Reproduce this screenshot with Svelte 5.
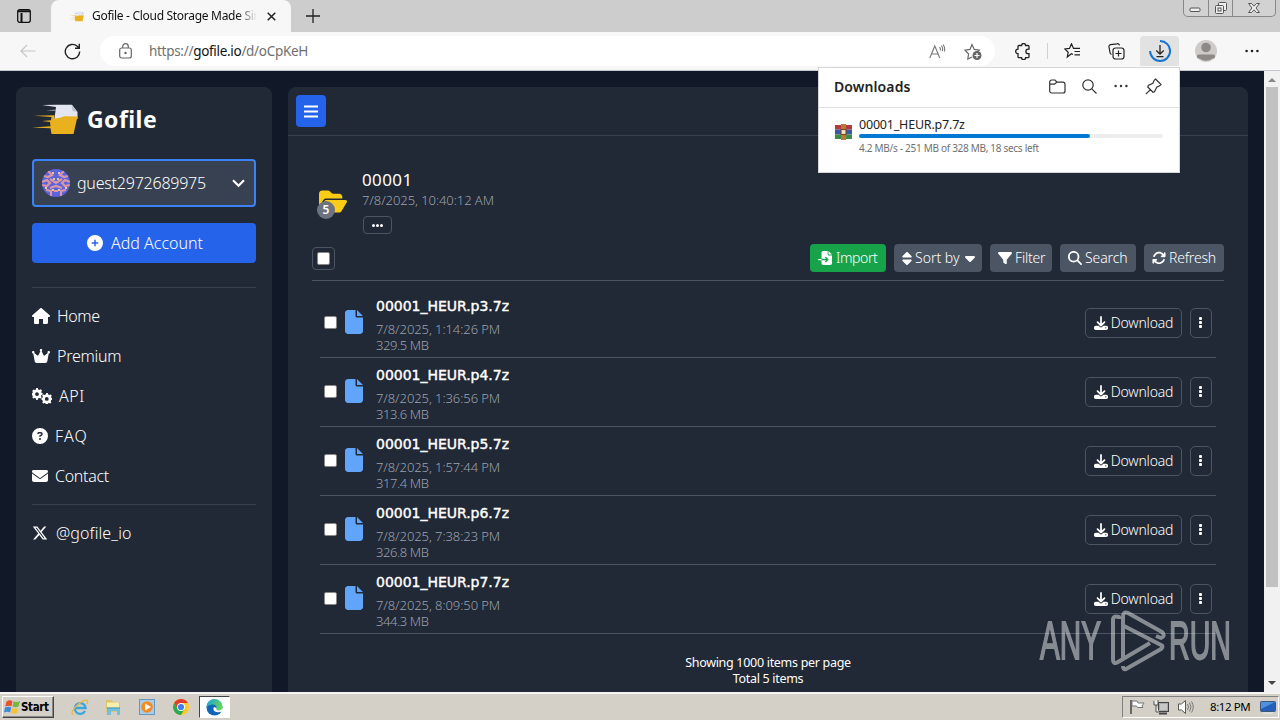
<script>
  const icons = {
    house: ['0 0 576 512', 'M575.8 255.5c0 18-15 32.1-32 32.1h-32l.7 180c0 26-16 44.400-40 44.400H376c-14 0-24-10-24-24V352H224v136c0 14-10 24-24 24H104c-24 0-40-18-40-40V287.600H32c-18 0-32-14-32-32.100c0-9 3-17 10-24L266.400 8c7-7 15-8 22-8s15 2 21 7L564.800 231.500c8 7 12 15 11 24z'],
    crown: ['0 0 576 512', 'M309 106c11.400-7 19-19.700 19-34c0-22.100-17.900-40-40-40s-40 17.900-40 40c0 14.400 7.600 27 19 34L209.700 220.600c-9.100 18.200-32.700 23.400-48.600 10.700L72 160c5-6.700 8-15 8-24c0-22.100-17.900-40-40-40S0 113.900 0 136s17.900 40 40 40L86.400 427.400c5.500 30.400 32 52.600 63 52.600H426.600c30.900 0 57.400-22.100 63-52.600L535.300 176c22.800 0 40.700-17.900 40.700-40s-17.900-40-40-40s-40 17.900-40 40c0 9 3 17.300 8 24l-89.100 71.300c-15.900 12.700-39.500 7.500-48.600-10.700L309 106z'],
    question: ['0 0 512 512', 'M256 512A256 256 0 1 0 256 0a256 256 0 1 0 0 512zM169.800 165.300c7.900-22.300 29.100-37.300 52.800-37.300h58.300c34.900 0 63.100 28.300 63.100 63.100c0 22.600-12.100 43.500-31.700 54.800L280 264.400c-.2 13-10.900 23.600-24 23.600c-13.300 0-24-10.700-24-24V250.500c0-8.600 4.600-16.500 12.100-20.800l44.300-25.400c4.700-2.700 7.600-7.700 7.600-13.100c0-8.400-6.800-15.100-15.100-15.100H222.600c-3.400 0-6.400 2.100-7.500 5.300l-.4 1.200c-4.400 12.500-18.200 19-30.600 14.600s-19-18.200-14.600-30.600l.4-1.200zM224 352a32 32 0 1 1 64 0 32 32 0 1 1 -64 0z'],
    mail: ['0 0 512 512', 'M48 64C21.500 64 0 85.500 0 112c0 15.100 7.100 29.300 19.200 38.400L236.800 313.600c11.400 8.500 27 8.500 38.400 0L492.800 150.400c12.100-9.100 19.200-23.300 19.200-38.400c0-26.500-21.500-48-48-48H48zM0 176V384c0 35.300 28.700 64 64 64H448c35.300 0 64-28.700 64-64V176L294.400 339.200c-22.800 17.100-54 17.100-76.800 0L0 176z'],
    x: ['0 0 512 512', 'M389.200 48h70.600L305.600 224.200 487 464H345L233.700 318.600 106.500 464H35.800L200.700 275.500 26.800 48H172.400L272.900 180.900 389.200 48zM364.400 421.800h39.100L151.100 88h-42L364.400 421.800z'],
    plus: ['0 0 512 512', 'M256 512A256 256 0 1 0 256 0a256 256 0 1 0 0 512zM232 344V280H168c-13.300 0-24-10.700-24-24s10.700-24 24-24h64V168c0-13.300 10.700-24 24-24s24 10.700 24 24v64h64c13.300 0 24 10.700 24 24s-10.700 24-24 24H280v64c0 13.300-10.700 24-24 24s-24-10.700-24-24z'],
    filter: ['0 0 512 512', 'M3.900 54.900C10.500 40.900 24.500 32 40 32H472c15.500 0 29.500 8.900 36.100 22.900s4.600 30.500-5.200 42.500L320 320.900V448c0 12.100-6.800 23.200-17.700 28.600s-23.800 4.300-33.500-3l-64-48c-8.100-6-12.800-15.500-12.800-25.600V320.900L9 97.300C-.7 85.400-2.800 68.800 3.900 54.900z'],
    search: ['0 0 512 512', 'M416 208c0 45.900-14.900 88.300-40 122.700L502.600 457.400c12.500 12.500 12.500 32.800 0 45.300s-32.800 12.500-45.300 0L330.700 376c-34.400 25.200-76.800 40-122.700 40C93.100 416 0 322.900 0 208S93.100 0 208 0S416 93.100 416 208zM208 352a144 144 0 1 0 0-288 144 144 0 1 0 0 288z'],
    sort: ['0 0 320 512', 'M137.400 41.400c12.500-12.500 32.800-12.500 45.300 0l128 128c9.200 9.200 11.900 22.900 6.900 34.900s-16.600 19.800-29.600 19.800H32c-12.900 0-24.600-7.800-29.600-19.800s-2.200-25.700 6.900-34.900l128-128zm0 429.300l-128-128c-9.200-9.200-11.900-22.900-6.900-34.900s16.600-19.800 29.600-19.800H288c12.900 0 24.600 7.800 29.600 19.800s2.200 25.700-6.900 34.900l-128 128c-12.500 12.500-32.800 12.500-45.300 0z'],
    caret: ['0 0 320 512', 'M137.400 374.600c12.500 12.500 32.800 12.500 45.300 0l128-128c9.200-9.200 11.900-22.900 6.900-34.900S301 192 288 192H32c-12.900 0-24.600 7.800-29.600 19.800s-2.200 25.700 6.900 34.900z'],
    rotate: ['0 0 512 512', 'M105.100 202.600c7.700-21.800 20.200-42.300 37.800-59.800c62.500-62.500 163.800-62.500 226.300 0L386.300 160H352c-17.700 0-32 14.300-32 32s14.300 32 32 32H463.900c17.700 0 32-14.300 32-32V80c0-17.700-14.300-32-32-32s-32 14.300-32 32v35.200L414.400 97.600c-87.500-87.500-229.300-87.500-316.800 0C73.200 122 55.600 150.700 44.800 181.400c-5.900 16.700 2.900 34.900 19.500 40.800s34.900-2.900 40.800-19.500zM39 289.300c-5 1.500-9.800 4.200-13.700 8.200c-4 4-6.700 8.800-8.100 14c-.8 3-1.200 6-1.200 8.900V432c0 17.700 14.300 32 32 32s32-14.300 32-32V396.900l17.600 17.500c87.500 87.400 229.300 87.400 316.700 0c24.400-24.400 42.100-53.100 52.900-83.700c5.900-16.700-2.900-34.900-19.500-40.800s-34.900 2.900-40.800 19.500c-7.700 21.800-20.200 42.300-37.800 59.800c-62.500 62.500-163.800 62.500-226.300 0L125.600 352H160c17.700 0 32-14.300 32-32s-14.300-32-32-32H48.400c-3.200 0-6.400.3-9.400 1.300z'],
    download: ['0 0 512 512', 'M288 32c0-17.700-14.300-32-32-32s-32 14.300-32 32V274.700l-73.400-73.400c-12.500-12.500-32.800-12.500-45.300 0s-12.500 32.800 0 45.300l128 128c12.500 12.500 32.800 12.500 45.300 0l128-128c12.500-12.500 12.500-32.800 0-45.300s-32.800-12.500-45.300 0L288 274.700V32zM64 352c-35.300 0-64 28.700-64 64v32c0 35.300 28.700 64 64 64H448c35.300 0 64-28.700 64-64V416c0-35.300-28.700-64-64-64H346.500l-45.300 45.300c-25 25-65.500 25-90.500 0L165.500 352H64zm368 56a24 24 0 1 1 0 48 24 24 0 1 1 0-48z'],
    file: ['0 0 384 512', 'M0 64C0 28.700 28.700 0 64 0H224V128c0 17.700 14.300 32 32 32H384V448c0 35.300-28.700 64-64 64H64c-35.300 0-64-28.700-64-64V64zm384 64H256V0L384 128z'],
    folder: ['0 0 576 512', 'M88.700 223.800L0 375.800V96C0 60.700 28.700 32 64 32H181.500c17 0 33.300 6.700 45.300 18.700l26.500 26.500c12 12 28.300 18.700 45.300 18.700H416c35.300 0 64 28.700 64 64v32H144c-22.800 0-43.800 12.100-55.300 31.800zm27.600 16.100C122.100 230 132.600 224 144 224H544c11.500 0 22 6.100 27.700 16.100s5.700 22.200-.1 32.100l-112 192C453.900 474 443.400 480 432 480H32c-11.500 0-22-6.100-27.700-16.100s-5.700-22.200 .1-32.100l112-192z'],
    import: ['0 0 512 512', 'M128 64c0-35.300 28.700-64 64-64H352V128c0 17.700 14.300 32 32 32H512V448c0 35.300-28.700 64-64 64H192c-35.300 0-64-28.700-64-64V336H302.100l-39 39c-9.400 9.400-9.400 24.600 0 33.900s24.600 9.400 33.900 0l80-80c9.400-9.400 9.400-24.600 0-33.900l-80-80c-9.400-9.400-24.600-9.400-33.900 0s-9.400 24.600 0 33.900l39 39H128V64zm0 224v48H24c-13.300 0-24-10.700-24-24s10.700-24 24-24H128zM512 128H384V0L512 128z'],
    gears: ['0 0 20 16', 'M4.200 0h1.600l.5 1.600 1 .4 1.500-.8L10 2.400l-.8 1.500.3.900 1.200.5v1.300l-1.300.5-.4 1 .6 1.300-1 1.100-1.500-.6-.9.400L5.700 12H4.300l-.6-1.700-.9-.4-1.500.6-1-1.100.6-1.400L0 7V5.200l.9-.8L.3 2.700 1.500 1.400l1.300.7.9-.4zM5 4.200a1.900 1.900 0 1 0 0 3.800a1.900 1.900 0 1 0 0-3.800zM14.300 5h1.400l.6 1.600.9.400 1.500-.6 1 1.200-.7 1.300.4.900.9.600v1.300l-1.200.5-.4 1 .6 1.300-1.100 1-1.400-.6-.9.500-.5 1.300h-1.300l-.5-1.300-1-.4-1.400.6-.9-1.100.6-1.300-.5-1-1-.5V10.400l1-.6.4-1-.6-1.300 1.100-1.100 1.500.6.9-.4zM14.800 9a1.900 1.900 0 1 0 0 3.800a1.900 1.900 0 1 0 0-3.800z']
  };
  const nav = [['house', 'Home', 18, 'n1'], ['crown', 'Premium', 18, 'n2'], ['gears', 'API', 20, 'n3'], ['question', 'FAQ', 16, 'n4'], ['mail', 'Contact', 16, 'n5']];
  const files = [
    ['00001_HEUR.p3.7z', '7/8/2025, 1:14:26 PM', '329.5 MB'],
    ['00001_HEUR.p4.7z', '7/8/2025, 1:36:56 PM', '313.6 MB'],
    ['00001_HEUR.p5.7z', '7/8/2025, 1:57:44 PM', '317.4 MB'],
    ['00001_HEUR.p6.7z', '7/8/2025, 7:38:23 PM', '326.8 MB'],
    ['00001_HEUR.p7.7z', '7/8/2025, 8:09:50 PM', '344.3 MB']
  ];
</script>

{#snippet fa(name, w, h)}
  <svg class="fa" width={w} height={h} viewBox={icons[name][0]} fill="currentColor"><path fill-rule={name === 'gears' ? 'evenodd' : 'nonzero'} d={icons[name][1]} /></svg>
{/snippet}

{#snippet logo(w, h)}
  <svg width={w} height={h} viewBox="0 0 46 31">
    <path d="M10 1L25 .8H40L45.500 8V15L22 18 24 3z" fill="#e3e6f1" />
    <path d="M39.500 1l6 7-5-1z" fill="#b9bfcc" />
    <path d="M14 6.500l10-1v1.500z" fill="#8e959f" />
    <path d="M2 11.800l20.500-.5-.5 3.400 7-1.200 3-1.300 13.500.3L41.500 30H19.500L18.500 24.300 0 23.500l18.500-1.200-.5-4.300-8-1 9-.7.500-3.300z" fill="#eab11f" />
  </svg>
{/snippet}

<div class="window">
  <header class="tabs">
    <div class="tabmenu"><svg width="14" height="14" viewBox="0 0 14 14" fill="none" stroke="#111" stroke-width="1.300"><rect x=".7" y=".7" width="12.600" height="12.600" rx="2" /><path d="M1 2.300h12M4.500 4v9" stroke-width="2" /></svg></div>
    <div class="tab">
      {@render logo(15, 11)}
      <span class="tabtitle">Gofile - Cloud Storage Made Sim</span>
      <svg class="close" width="9" height="9" viewBox="0 0 9 9" stroke="#222" stroke-width="1.500"><path d="M.7.7l7.600 7.600M8.300.7L.7 8.300" /></svg>
    </div>
    <svg class="newtab" width="14" height="14" viewBox="0 0 14 14" stroke="#222" stroke-width="1.300"><path d="M7 0v14M0 7h14" /></svg>
    <div class="winbtns">
      <span><svg width="13" height="6" viewBox="0 0 13 6"><rect x="1" y="1" width="10" height="3.500" rx="1" fill="#eee" stroke="#555" /></svg></span>
      <span><svg width="14" height="13" viewBox="0 0 14 13" fill="#eee" stroke="#555"><rect x="4.500" y=".5" width="8" height="8" rx="1" /><rect x="1.500" y="3.500" width="8" height="8" rx="1" /><rect x="4" y="6" width="3" height="3" /></svg></span>
      <span class="wide"><svg width="14" height="12" viewBox="0 0 14 12"><path d="M1.500 1.500h3L7 4.200l2.500-2.700h3L9 6l3.500 4.500h-3L7 7.800l-2.500 2.700h-3L5 6z" fill="#eee" stroke="#555" /></svg></span>
    </div>
  </header>

  <div class="toolbar">
    <svg class="back" width="16" height="14" viewBox="0 0 16 14" fill="none" stroke="#c5c5c5" stroke-width="1.200"><path d="M7 1L1 7l6 6M1 7h14.500" /></svg>
    <svg class="reload" width="17" height="17" viewBox="0 0 17 17" fill="none" stroke="#222" stroke-width="1.400"><path d="M15.700 8.500A7.200 7.200 0 1 1 13.300 3.200L15.200 5M15.300.8V5.200H11" /></svg>
    <div class="omni">
      <svg width="13" height="16" viewBox="0 0 13 16" fill="none" stroke="#666" stroke-width="1.200"><rect x=".7" y="5" width="11.600" height="10" rx="2" /><path d="M3.700 5V3.500a2.800 2.800 0 0 1 5.600 0V5" /><circle cx="6.500" cy="10" r=".6" fill="#666" /></svg>
      <span class="url">https://<b>gofile.io</b>/d/oCpKeH</span>
      <svg class="read" width="17" height="15" viewBox="0 0 17 15" fill="none" stroke="#777" stroke-width="1.100"><path d="M.8 14L5.800 2l5 12M2.500 10h6.600M10.500 3q1.300 1.500.8 3.500M12.300 1.500q2 2.500 1 5.500M14 .5q2.500 3.300 1.300 7" /></svg>
      <svg class="addfav" width="18" height="17" viewBox="0 0 18 17" fill="none" stroke="#666" stroke-width="1.200"><path d="M8 14l-4.200 2 .8-5L1 7.200l5-.8L8 1.500l2.300 4.900 5 .8-1.700 1.600" /><circle cx="13" cy="12.500" r="4.500" fill="#666" stroke="none" /><path d="M13 10v5M10.500 12.500h5" stroke="#fff" /></svg>
    </div>
    <svg class="ext" width="16" height="17" viewBox="0 0 16 17" fill="none" stroke="#222" stroke-width="1.300"><path d="M4 2.500h2.600a2 2 0 0 1 4 0h2.400a1 1 0 0 1 1 1v2.600h-.8a2.300 2.300 0 0 0 0 4.600h.8v3a1 1 0 0 1-1 1h-2.400a2 2 0 0 1-4 0H4a1 1 0 0 1-1-1v-3a2.300 2.300 0 0 1 0-4.600V3.500a1 1 0 0 1 1-1z" /></svg>
    <i class="sep"></i>
    <svg class="favs" width="17" height="16" viewBox="0 0 17 16" fill="none" stroke="#222" stroke-width="1.200"><path d="M9 11.500l-1.600-.7L3.300 14l.9-4.800L.8 6l4.700-.6 2-4.600 2 4.600H16M10.500 8.500H16M10.500 11.800H16" /></svg>
    <svg class="coll" width="17" height="17" viewBox="0 0 17 17" fill="none" stroke="#222" stroke-width="1.200"><path d="M3.500 11.500a2 2 0 0 1-1.500-2L1 4a2 2 0 0 1 1.500-2.400L9 .8a2 2 0 0 1 2.500 1.500" /><rect x="5" y="5" width="11" height="11" rx="2.500" /><path d="M10.500 7.500v6M7.500 10.500h6" /></svg>
    <div class="dl"><svg width="22" height="22" viewBox="0 0 22 22" fill="none"><path d="M11 1A10 10 0 1 1 1.100 11" stroke="#1474cf" stroke-width="2" /><path d="M11 5v9M7.300 10.500L11 14.200l3.700-3.700M7.500 16.700h7" stroke="#222" stroke-width="1.300" /></svg></div>
    <svg class="avatar" width="22" height="22" viewBox="0 0 22 22"><circle cx="11" cy="11" r="11" fill="#cfcbc8" /><circle cx="11" cy="7.500" r="4.800" fill="#8d8986" /><path d="M3.500 14.500h15a2 2 0 0 1-1 4Q11 23 4.500 18.500a2 2 0 0 1-1-4z" fill="#8d8986" /></svg>
    <svg class="more" width="14" height="4" viewBox="0 0 14 4" fill="#222"><circle cx="1.600" cy="2" r="1.300" /><circle cx="7" cy="2" r="1.300" /><circle cx="12.400" cy="2" r="1.300" /></svg>
  </div>

  <div class="view">
    <div class="page">
      <aside>
        <div class="brand">{@render logo(46, 31)}<span>Gofile</span></div>
        <div class="account">
          <svg width="28" height="28" viewBox="0 0 28 28">
            <defs><clipPath id="disc"><circle cx="14" cy="14" r="14" /></clipPath></defs>
            <g clip-path="url(#disc)"><rect width="28" height="28" fill="#5a63e0" />
              <g fill="none" stroke="#dc98a0" stroke-width="2.200"><path d="M6 2l4 4-4 2-4-1M22 2l-4 4 4 2 4-1M8 10l6 4 6-4M0 13l5-2 3 3-3 3-5-1M28 13l-5-2-3 3 3 3 5-1M8 19l6-2 6 2M4 21l5 1v5M24 21l-5 1v5M12 22h4" /></g>
              <g fill="#e8c88a"><path d="M10 3h2v2h-2zM16 3h2v2h-2zM11 9h2v2h-2zM15 9h2v2h-2zM3 18h2v2H3zM23 18h2v2h-2zM10 20h2v2h-2zM16 20h2v2h-2z" /></g></g>
          </svg>
          <span>guest2972689975</span>
          <svg class="chev" width="13" height="9" viewBox="0 0 13 9" fill="none" stroke="#fff" stroke-width="2.200"><path d="M1 1.300l5.500 5.500L12 1.300" /></svg>
        </div>
        <button class="add">{@render fa('plus', 16, 16)}<span>Add Account</span></button>
        <nav>
          {#each nav as [icon, label, w, cls]}
            <a href="#top">{@render fa(icon, w, 16)}<span class={cls}>{label}</span></a>
          {/each}
        </nav>
        <a class="social" href="#top">{@render fa('x', 16, 16)}<span>@gofile_io</span></a>
      </aside>

      <main>
        <div class="topbar"><button aria-label="Menu"><svg width="14" height="13" viewBox="0 0 14 13" stroke="#fff" stroke-width="2"><path d="M0 1.500h14M0 6.500h14M0 11.500h14" /></svg></button></div>
        <section class="folder">
          <div class="foldericon">{@render fa('folder', 28, 25)}<b>5</b></div>
          <div class="meta"><h1>00001</h1><p>7/8/2025, 10:40:12 AM</p><button aria-label="Details"><i></i><i></i><i></i></button></div>
        </section>
        <div class="actions">
          <span class="all"><i class="box"></i></span>
          <div class="buttons">
            <button class="green">{@render fa('import', 14, 14)}<span>Import</span></button>
            <button class="sortb">{@render fa('sort', 10, 15)}<span>Sort by</span>{@render fa('caret', 10, 16)}</button>
            <button class="filterb">{@render fa('filter', 14, 14)}<span>Filter</span></button>
            <button class="searchb">{@render fa('search', 14, 14)}<span>Search</span></button>
            <button class="refreshb">{@render fa('rotate', 14, 14)}<span>Refresh</span></button>
          </div>
        </div>
        <ul>
          {#each files as [name, date, size]}
            <li>
              <i class="box"></i>
              <span class="fileicon">{@render fa('file', 18, 24)}</span>
              <div class="info"><strong>{name}</strong><span class="date">{date}</span><span class="size">{size}</span></div>
              <button class="get">{@render fa('download', 14, 14)}<span>Download</span></button>
              <button class="dots" aria-label="More"><i></i><i></i><i></i></button>
            </li>
          {/each}
        </ul>
        <footer><div>Showing 1000 items per page</div><div>Total 5 items</div></footer>
      </main>
    </div>
    <div class="scroll"><i class="up"></i><div class="thumb"></div><i class="down"></i></div>
  </div>

  <div class="taskbar">
    <div class="start">
      <svg width="17" height="16" viewBox="0 0 16 16"><path d="M2 2.500Q5 .5 8 2L7 7.200Q4 6 .8 7.500z" fill="#e8512c" /><path d="M9 2.200Q12 3.800 15.500 2L14 7.500Q11 9 8 7.500z" fill="#74b843" /><path d="M.5 8.800Q4 7 6.800 8.500L5.500 13.500Q3 12-.5 13.500z" fill="#3d8bd4" /><path d="M7.800 8.800Q11 10.500 13.800 9L12.500 14Q9.500 15.500 6.500 14z" fill="#f6c230" /></svg>
      <b>Start</b>
    </div>
    <svg class="ie" width="18" height="17" viewBox="0 0 18 17" fill="none"><path d="M14 12A5.400 5.400 0 1 1 14.600 9H4.500" stroke="#38a7df" stroke-width="2.300" /><path d="M2 16Q-1 13 6 6.500T16.500 1.500q.8 1-1 3.500" stroke="#e8b84a" stroke-width="1.300" /></svg>
    <svg class="explorer" width="17" height="16" viewBox="0 0 17 16"><path d="M1 1h6l1 2h7v10H1z" fill="#dcc56c" /><path d="M2 3.500h12v5H2z" fill="#f8edb0" /><path d="M2 16V9h13v7h-3v-4H6v4z" fill="#6fc0e4" /><path d="M2 9h13" stroke="#3a94c0" /></svg>
    <svg class="wmp" width="16" height="16" viewBox="0 0 16 16"><rect x=".5" y=".5" width="15" height="15" fill="#a8cdec" stroke="#6598bd" /><circle cx="8" cy="8" r="5.800" fill="#f38b20" /><path d="M6 4.500l6 3.500-6 3.500z" fill="#fff" /></svg>
    <svg class="chrome" width="16" height="16" viewBox="0 0 16 16"><circle cx="8" cy="8" r="8" fill="#ffca28" /><path d="M1.100 4A8 8 0 0 1 14.900 4H8l-3.500 6z" fill="#e33b2e" /><path d="M1.100 4A8 8 0 0 0 8 16l3.500-6H4.500z" fill="#2da94f" /><circle cx="8" cy="8" r="4" fill="#fff" /><circle cx="8" cy="8" r="3.100" fill="#3c7ff0" /></svg>
    <div class="edge"><svg width="17" height="17" viewBox="0 0 17 17"><defs><linearGradient id="eg" x2="1" y2=".4"><stop stop-color="#1b9de2" /><stop offset="1" stop-color="#62d65a" /></linearGradient></defs><circle cx="8.500" cy="8.500" r="8" fill="#1266b8" /><path d="M.5 8A8 8 0 0 1 16.500 8q0 3.500-4 3.500-3 0-2-2.500.5-3-3-3.500Q3 5 .5 8z" fill="url(#eg)" /><path d="M8 8q-1.500 3 1 4.500 3 1.500 7 0l.5-3q-2 2-4 2-2.500 0-2-2.500z" fill="#fff" /></svg></div>
    <div class="tray">
      <svg width="17" height="16" viewBox="0 0 17 16"><path d="M2 1v14" stroke="#444" stroke-width="1.500" /><path d="M3 2h5l1 2h6l-2 3 1 1.500H8.500L7.500 7H3z" fill="#fff" stroke="#777" /></svg>
      <svg width="17" height="16" viewBox="0 0 17 16"><rect x="5.500" y="3.500" width="10" height="9" fill="#aaa" stroke="#444" /><rect x="7" y="5" width="7" height="6" fill="#c8c8c8" /><path d="M1 2v4h4V1M3 6v7h3" fill="#eee" stroke="#555" /><path d="M6 14.500h8" stroke="#444" stroke-width="2" /></svg>
      <svg width="18" height="16" viewBox="0 0 18 16" fill="none" stroke="#777"><path d="M1.500 5h3L8.500 1.500v13L4.500 11h-3z" fill="#fff" stroke="#555" /><path d="M10.500 5q2 3 0 6M12.500 3.500q3 4.500 0 9M14.500 2.500q3.500 5.500 0 11" /></svg>
      <span>8:12 PM</span>
      <svg class="desk" width="16" height="13" viewBox="0 0 16 13"><rect x=".5" y=".5" width="15" height="10" rx="1" fill="#2460b8" stroke="#3d5776" /><path d="M1 1h14L1 8z" fill="#4f90e0" /><path d="M3 12h10" stroke="#ddd" stroke-width="2" /></svg>
    </div>
  </div>

  <div class="popup">
    <div class="phead">
      <b>Downloads</b>
      <svg class="p1" width="17" height="15" viewBox="0 0 17 15" fill="none" stroke="#333" stroke-width="1.200"><path d="M.7 3a2 2 0 0 1 2-2H6l2 2.200h6a2 2 0 0 1 2 2V12a2 2 0 0 1-2 2H2.700a2 2 0 0 1-2-2zM1 5.200h4.500L8 3" /></svg>
      <svg class="p2" width="15" height="15" viewBox="0 0 15 15" fill="none" stroke="#333" stroke-width="1.200"><circle cx="6" cy="6" r="5.200" /><path d="M9.800 9.800l4.700 4.700" /></svg>
      <svg class="p3" width="14" height="4" viewBox="0 0 14 4" fill="#333"><circle cx="1.600" cy="2" r="1.200" /><circle cx="7" cy="2" r="1.200" /><circle cx="12.400" cy="2" r="1.200" /></svg>
      <svg class="p4" width="17" height="17" viewBox="0 0 17 17" fill="none" stroke="#333" stroke-width="1.200"><path d="M10.500 1L16 6.500l-1.300 1.300-3 1.400-2.200 4.500-1.500.5L2.800 9l.5-1.500 4.500-2.200 1.400-3zM5.200 11.800L.8 16.200" /></svg>
    </div>
    <div class="item">
      <svg width="17" height="16" viewBox="0 0 17 16"><path d="M0 1h17v4.500H0z" fill="#b23a3c" /><path d="M0 5.500h17v5H0z" fill="#3858a8" /><path d="M0 10.500h17V15H0z" fill="#3c8a45" /><path d="M6 0h5v16H6z" fill="#b8793c" /><rect x="6" y="5.500" width="5" height="5" fill="#f3dfb0" stroke="#7d3b22" /></svg>
      <div class="pinfo"><span class="pname">00001_HEUR.p7.7z</span><div class="bar"><i></i></div><small>4.2 MB/s - 251 MB of 328 MB, 18 secs left</small></div>
    </div>
  </div>

  <svg class="mark" width="194" height="64" viewBox="0 0 194 64">
    <g fill="none" stroke="#fff" stroke-width="4" stroke-linejoin="round">
      <path d="M80 10V8Q74 6 74 11V50q0 6 5 3L111 34" />
      <path d="M84 50V8q0-6 5-4L123 23q4 4-1 6l-5-2" />
      <path d="M85 17L122 36q3 1 0 4L87 60q-3 1-3-3" />
    </g>
    <text x="1" y="50" textLength="61" lengthAdjust="spacingAndGlyphs">ANY</text>
    <text x="130" y="50" textLength="62" lengthAdjust="spacingAndGlyphs">RUN</text>
  </svg>
</div>

<style>
  :global(body) { margin: 0; overflow: hidden; }
  * { box-sizing: border-box; }
  .window { position: relative; width: 1280px; height: 720px; display: flex; flex-direction: column; overflow: hidden; font-family: "Noto Sans", "Open Sans", sans-serif; color: #fff; }
  svg { display: block; flex: none; }
  button { font: inherit; color: inherit; border: 0; padding: 0; margin: 0; display: flex; align-items: center; background: none; }
  span, b, strong, small { white-space: nowrap; }
  a { color: inherit; text-decoration: none; }

  .tabs { height: 32px; flex: none; background: #cdcdcd; display: flex; align-items: flex-start; color: #111; }
  .tabmenu { width: 51px; height: 32px; padding: 9px 0 0 17px; }
  .tab { width: 240px; height: 32px; background: #f7f7f7; border-radius: 8px 8px 0 0; display: flex; align-items: center; padding: 0 15px 0 18px; }
  .tabtitle { width: 166px; margin: -1px 0 0 8px; overflow: hidden; font-size: 12px; letter-spacing: -.3px; -webkit-mask-image: linear-gradient(90deg, #000 88%, transparent); mask-image: linear-gradient(90deg, #000 88%, transparent); }
  .close { margin-left: 10px; }
  .newtab { margin: 9px 0 0 15px; }
  .winbtns { margin-left: auto; margin-right: 4px; width: 93px; height: 17px; display: flex; border: 1px solid #888; border-top: 0; border-radius: 0 0 5px 5px; background: #d2d2d2; }
  .winbtns span { width: 25px; display: flex; align-items: center; justify-content: center; border-right: 1px solid #888; }
  .winbtns span:first-child { padding-top: 4px; }
  .winbtns .wide { width: 42px; border: 0; }

  .toolbar { height: 39px; flex: none; background: #f7f7f7; border-bottom: 1px solid #c4c8cc; display: flex; align-items: center; }
  .back { margin-left: 20px; }
  .reload { margin-left: 28px; }
  .omni { width: 895px; height: 30px; margin-left: 19px; background: #fff; border-radius: 15px; display: flex; align-items: center; padding-left: 19px; color: #707070; }
  .url { margin: 0 0 0 17px; font-size: 13.500px; letter-spacing: -.3px; }
  .url b { font-weight: 400; color: #111; }
  .read { margin-left: auto; }
  .addfav { margin: 0 13px 0 18px; }
  .ext { margin-left: 20px; }
  .sep { width: 1px; height: 16px; margin-left: 16px; background: #d0d0d0; }
  .favs { margin-left: 16px; }
  .coll { margin-left: 27px; }
  .dl { width: 39px; height: 30px; margin-left: 15px; border-radius: 4px 4px 0 0; background: #e2e2e2; display: flex; align-items: center; justify-content: center; }
  .avatar { margin-left: 16px; }
  .more { margin-left: 28px; }

  .view { height: 621px; flex: none; display: flex; background: #111827; }
  .page { width: 1264px; display: flex; gap: 16px; padding: 16px 16px 0; }
  aside { width: 256px; background: #212836; border-radius: 8px 8px 0 0; padding: 16px; font-weight: 300; }
  .brand { height: 32px; display: flex; align-items: center; gap: 9px; }
  .brand span { font-size: 23px; font-weight: 700; letter-spacing: .45px; }
  .account { height: 48px; margin-top: 24px; border: 2px solid #3b82f6; border-radius: 4px; background: #374151; display: flex; align-items: center; padding: 0 8px; font-size: 16px; }
  .account span { margin-left: 7px; letter-spacing: -.22px; }
  .chev { margin-left: auto; margin-right: 1px; }
  .add { width: 224px; height: 40px; margin-top: 16px; border-radius: 4px; background: #2563eb; justify-content: center; gap: 8px; font-size: 16px; padding-left: 2px; }
  nav { margin-top: 24px; height: 218px; border-top: 1px solid #374151; border-bottom: 1px solid #374151; padding-top: 8px; display: flex; flex-direction: column; }
  nav a { height: 40px; display: flex; align-items: center; gap: 7px; font-size: 16px; }
  .n1 { letter-spacing: -.4px; }
  .n2 { letter-spacing: -.25px; }
  .n3 { letter-spacing: .6px; }
  .n4 { letter-spacing: 1.100px; }
  .n5 { letter-spacing: -.3px; }
  .social { display: flex; align-items: center; height: 40px; margin-top: 8px; gap: 8px; font-size: 16px; letter-spacing: .12px; }

  main { width: 960px; background: #212836; border-radius: 8px 8px 0 0; font-weight: 300; }
  .topbar { height: 49px; border-bottom: 1px solid #374151; padding: 8px; }
  .topbar button { width: 30px; height: 32px; border-radius: 4px; background: #2563eb; justify-content: center; }
  .folder { height: 104px; padding: 33px 0 0 31px; display: flex; }
  .foldericon { position: relative; width: 28px; height: 25px; margin-top: 20px; color: #facc15; }
  .foldericon b { position: absolute; left: -2px; top: 12px; width: 18px; height: 18px; border-radius: 50%; background: #6b7280; color: #fff; font-size: 12px; line-height: 18px; text-align: center; font-weight: 600; }
  .meta { margin-left: 15px; }
  h1 { margin: 0; font-size: 17px; line-height: 22px; font-weight: 400; letter-spacing: .4px; }
  p { margin: 0 0 7px; font-size: 13px; line-height: 18px; color: #9ca3af; letter-spacing: -.07px; }
  .meta button { width: 29px; height: 18px; margin-left: 1px; border: 1px solid #4b5563; border-radius: 4px; justify-content: center; gap: 1px; }
  .meta button i { width: 3px; height: 3px; border-radius: 50%; background: #fff; }
  .actions { margin: 0 24px; height: 41px; border-bottom: 1px solid #4b5563; display: flex; align-items: flex-start; padding-top: 4px; }
  .all { width: 23px; height: 23px; margin-top: 3px; border: 1px solid #4b5563; border-radius: 4px; display: flex; align-items: center; justify-content: center; }
  .box { width: 13px; height: 13px; background: #fff; border: 1px solid #888; border-radius: 2px; flex: none; }
  .buttons { margin-left: auto; display: flex; gap: 8px; font-size: 14px; }
  .buttons button { height: 28px; border-radius: 4px; background: #4b5563; padding-left: 8px; gap: 3px; }
  .buttons button span { margin-top: -2px; }
  .buttons .green { width: 76px; background: #16a34a; letter-spacing: -.4px; }
  .green span { margin-left: 1px; }
  .sortb { width: 88px; }
  .sortb span { margin-right: 2px; }
  .filterb { width: 62px; letter-spacing: -.2px; }
  .searchb { width: 76px; letter-spacing: -.1px; }
  .refreshb { width: 80px; letter-spacing: -.2px; }
  ul { list-style: none; margin: 8px 32px 0; padding: 0; }
  li { height: 69px; border-bottom: 1px solid #4b5563; display: flex; align-items: center; padding: 0 4px; }
  li .box, .fileicon { margin-top: -2px; }
  .fileicon { margin-left: 8px; color: #60a5fa; }
  .info { margin-left: 13px; width: 300px; height: 69px; display: flex; flex-direction: column; padding-top: 6px; font-size: 13px; color: #9ca3af; line-height: 16px; }
  .info strong { font: 500 14px/22px "DejaVu Sans", "Noto Sans", sans-serif; color: #fff; margin-bottom: 4px; letter-spacing: -.02px; -webkit-text-stroke: .4px #fff; }
  .date { letter-spacing: -.08px; }
  .size { letter-spacing: -.4px; }
  .get { margin-left: auto; width: 97px; height: 30px; border: 1px solid #4b5563; border-radius: 5px; justify-content: center; gap: 3px; font-size: 14px; letter-spacing: -.2px; }
  .get span { margin-top: -2px; }
  .dots { margin-left: 8px; width: 22px; height: 30px; border: 1px solid #4b5563; border-radius: 5px; flex-direction: column; justify-content: center; gap: 1px; padding: 0 1px 1px 0; }
  .dots i { width: 3px; height: 3px; border-radius: 1px; background: #fff; }
  footer { text-align: center; margin-top: 21px; font-size: 12.500px; line-height: 16px; font-weight: 400; letter-spacing: -.3px; }

  .scroll { width: 16px; background: #f1f1f1; display: flex; flex-direction: column; align-items: center; }
  .up { border: 4px solid transparent; border-bottom-color: #888; border-top: 0; margin-top: 7px; }
  .thumb { width: 12px; height: 500px; margin-top: 5px; background: #c1c1c1; }
  .down { border: 4px solid transparent; border-top-color: #444; border-bottom: 0; margin-top: auto; margin-bottom: 7px; }

  .taskbar { height: 28px; flex: none; background: #d4d0c8; border-top: 2px solid #f5f4f1; display: flex; align-items: center; color: #000; }
  .start { width: 52px; height: 22px; margin-left: 2px; border: 1px solid #fff; border-right-color: #444; border-bottom-color: #444; box-shadow: inset -1px -1px #888; display: flex; align-items: center; padding-left: 1px; gap: 0; font: 700 11.500px "DejaVu Sans Condensed", "DejaVu Sans", sans-serif; letter-spacing: -.35px; }
  .ie { margin-left: 17px; }
  .explorer { margin-left: 16px; }
  .wmp { margin-left: 17px; }
  .chrome { margin-left: 18px; }
  .edge { width: 31px; height: 22px; margin-left: 10px; background: #fff; border: 1px solid #444; border-right-color: #fff; border-bottom-color: #fff; display: flex; align-items: center; justify-content: center; }
  .tray { margin-left: auto; margin-right: 1px; width: 157px; height: 22px; border: 1px solid #808080; border-right-color: #fff; border-bottom-color: #fff; display: flex; align-items: center; padding-left: 6px; gap: 7px; font-size: 11.500px; }
  .tray span { margin: -1px 0 0 8px; letter-spacing: -.4px; }
  .desk { margin-left: auto; margin-right: 2px; }

  .popup { position: absolute; left: 818px; top: 67px; width: 362px; height: 106px; background: #fff; border: 1px solid #d4d6d9; color: #222; }
  .phead { height: 40px; border-bottom: 1px solid #e2e2e2; display: flex; align-items: center; padding: 0 0 2px 15px; }
  .phead b { width: 215px; font-size: 14px; font-weight: 600; letter-spacing: .1px; }
  .p2 { margin-left: 16px; }
  .p3 { margin-left: 17px; margin-top: -1px; }
  .p4 { margin-left: 17px; }
  .item { display: flex; padding: 9px 15px 0 16px; }
  .item > svg { margin-top: 7px; }
  .pinfo { margin-left: 7px; width: 304px; display: flex; flex-direction: column; }
  .pname { font-size: 12.500px; line-height: 16px; margin-bottom: 1px; letter-spacing: -.2px; }
  .bar { height: 4px; border-radius: 2px; background: #ededed; }
  .bar i { display: block; width: 231px; height: 4px; border-radius: 2px; background: #0078d4; }
  small { margin-top: 2px; font-size: 10px; line-height: 16px; color: #707070; letter-spacing: -.29px; }

  .mark { position: absolute; left: 1039px; top: 609px; opacity: .46; overflow: visible; }
  .mark text { font: 400 53px "Liberation Sans Narrow", "Liberation Sans", sans-serif; fill: #fff; stroke: #fff; stroke-width: 1.800px; }
</style>
